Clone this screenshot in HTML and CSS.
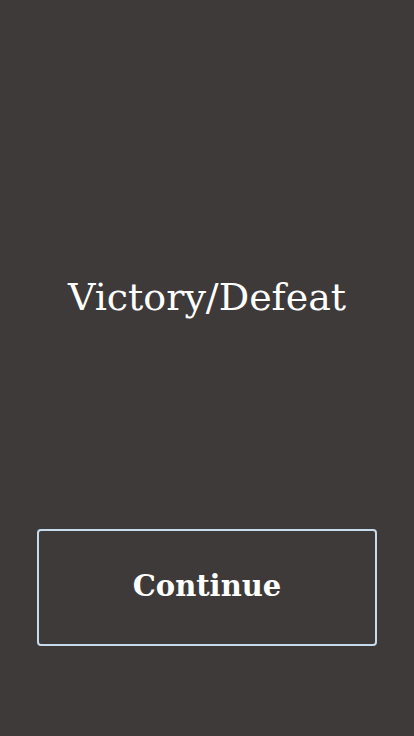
FILE: index.html
```html
<!DOCTYPE html>
<html lang="en">
<head>
<meta charset="utf-8">
<title>Result</title>
<link rel="stylesheet" href="styles.css">
</head>
<body>
<main class="screen">
  <h1 class="title">Victory/Defeat</h1>
  <button class="continue" type="button">Continue</button>
</main>
</body>
</html>
```
FILE: styles.css
```css
html, body {
  margin: 0;
  padding: 0;
  background: #3d3a39;
}
.screen {
  box-sizing: border-box;
  height: 736px;
  display: flex;
  flex-direction: column;
  align-items: center;
  padding: 267px 37px 90px;
}
.title {
  margin: 0;
  font-family: "DejaVu Serif", serif;
  font-weight: normal;
  font-size: 38px;
  line-height: 60px;
  color: #ffffff;
  text-align: center;
}
.continue {
  margin-top: auto;
  width: 100%;
  height: 117px;
  box-sizing: border-box;
  padding: 0 0 4px;
  background: transparent;
  border: 2px solid #c6dbee;
  border-radius: 4px;
  font-family: "DejaVu Serif", serif;
  font-weight: bold;
  font-size: 29px;
  color: #ffffff;
  cursor: pointer;
}
```
